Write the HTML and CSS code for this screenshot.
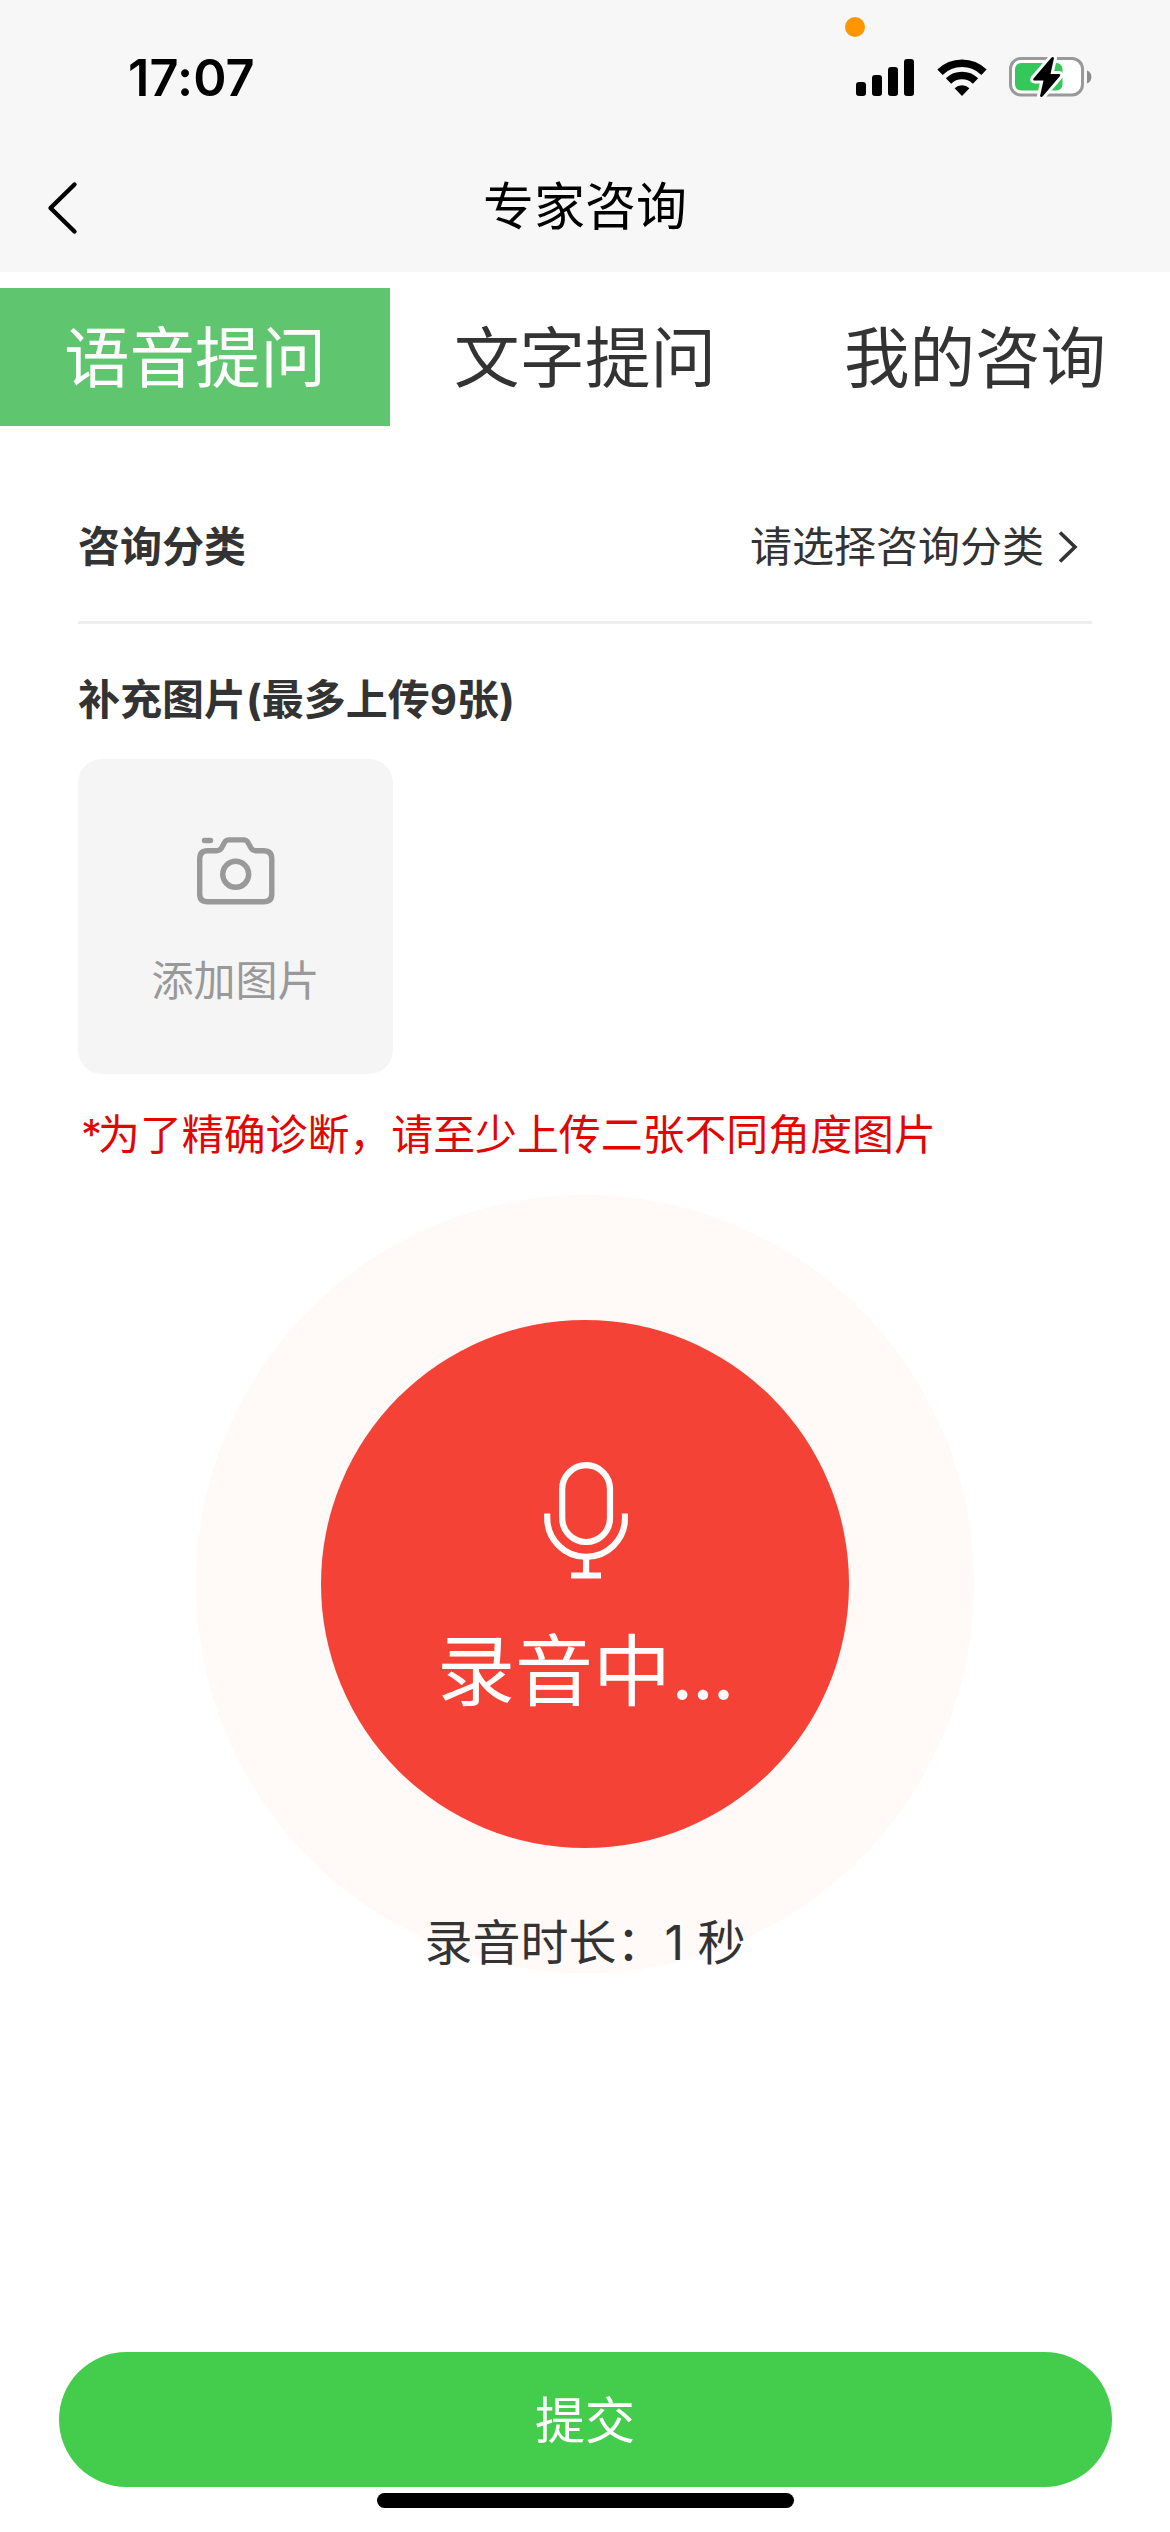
FILE: index.html
```html
<!DOCTYPE html>
<html lang="zh-CN">
<head>
<meta charset="utf-8">
<title>专家咨询</title>
<link rel="stylesheet" href="styles.css">
</head>
<body>
<div class="screen">
  <header class="top">
    <div class="status">
      <span class="time">17:07</span>
      <span class="mic-dot"></span>
      <div class="indicators">
        <svg class="signal" width="58" height="38" viewBox="0 0 58 38">
          <rect x="0" y="23" width="10" height="14" rx="3"/>
          <rect x="16" y="16" width="10" height="21" rx="3"/>
          <rect x="32" y="8" width="10" height="29" rx="3"/>
          <rect x="48" y="0" width="10" height="37" rx="3"/>
        </svg>
        <svg class="wifi" width="50" height="38" viewBox="0 0 50 38">
          <path d="M3 13.2A31.5 31.5 0 0 1 47 13.2M11.5 22A19.5 19.5 0 0 1 38.5 22" fill="none" stroke="#000" stroke-width="7.6"/>
          <path d="M17.6 29.2a10.5 10.5 0 0 1 14.8 0L25 37Z"/>
        </svg>
        <svg class="battery" width="84" height="42" viewBox="0 0 84 42">
          <rect x="1.5" y="2.5" width="72" height="36.500" rx="10.500" fill="#fff" stroke="#999" stroke-width="3"/>
          <path d="M78 14.500a7 7 0 0 1 0 13z" fill="#8c8c8c"/>
          <rect x="6" y="7" width="47.500" height="27.500" rx="6" fill="#34c759"/>
          <path d="M42.500 1.500 24.500 22.500q-1 2 1 2H34.500L31 40q1 2 3 0L51 20q1-2-1-2H41.500L45 2q-1-1.500-2.500-.5z" fill="#000" stroke="#fff" stroke-width="6" stroke-linejoin="round" paint-order="stroke"/>
        </svg>
      </div>
    </div>
    <div class="nav">
      <svg class="back" width="36" height="56" viewBox="0 0 36 56"><path d="M29.500 4.500 5.500 28l24 23.500" fill="none" stroke="#000" stroke-width="4.400" stroke-linecap="round" stroke-linejoin="round"/></svg>
      <h1 class="title">专家咨询</h1>
    </div>
  </header>
  <nav class="tabs">
    <a class="tab active">语音提问</a>
    <a class="tab">文字提问</a>
    <a class="tab">我的咨询</a>
  </nav>
  <main class="form">
    <div class="category">
      <span class="label">咨询分类</span>
      <span class="value">请选择咨询分类
        <svg class="arrow" width="20" height="34" viewBox="0 0 20 34"><path d="M2 2.500 17 17 2 31.500" fill="none" stroke="#333" stroke-width="3.600"/></svg>
      </span>
    </div>
    <div class="label photos">补充图片(最多上传9张)</div>
    <div class="upload">
      <svg width="78" height="68" viewBox="0 0 78 68" fill="none" stroke="#999" stroke-width="5.400">
        <path d="M7.500 3.500h6" stroke-linecap="round"/>
        <path d="M10.500 13.700H19.500Q23 13.700 24.500 11L27.500 5.500Q29 2.900 32 2.900H46.500Q49.500 2.900 51 5.500L54 11Q55.500 13.700 59 13.700H66.500Q74.800 13.700 74.800 22V57Q74.800 64.800 66.500 64.800H10.500Q2.700 64.800 2.700 57V22Q2.700 13.700 10.500 13.700Z"/>
        <circle cx="38.700" cy="37.300" r="13"/>
      </svg>
      <span>添加图片</span>
    </div>
    <p class="hint"><span class="star">*</span>为了精确诊断，请至少上传二张不同角度图片</p>
  </main>
  <section class="recorder">
    <div class="disc">
      <svg class="mic" width="84" height="118" viewBox="0 0 84 118" fill="none" stroke="#fff" stroke-width="6.200">
        <rect x="18.200" y="3.200" width="47.800" height="76.800" rx="23.900"/>
        <path d="M3.200 51.500V56A38.900 38.900 0 0 0 81 56V51.500M42.100 95V113.500M27 113.500H57"/>
      </svg>
      <span class="state">录音中<span class="dots">...</span></span>
    </div>
    <p class="duration">录音时长：1 秒</p>
  </section>
  <footer class="bottom">
    <button class="submit">提交</button>
    <div class="home-bar"></div>
  </footer>
</div>
</body>
</html>
```

FILE: styles.css
```css
* { box-sizing: border-box; margin: 0; padding: 0; }
body {
  background: #fff;
  color: #333;
  font-family: Inter, "Noto Sans CJK SC", sans-serif;
}
.screen {
  width: 1170px;
  height: 2532px;
  display: flex;
  flex-direction: column;
  overflow: hidden;
}
.top { height: 272px; background: #f7f7f7; color: #000; flex: none; }
.status {
  position: relative;
  height: 140px;
  display: flex;
  justify-content: space-between;
  padding: 48px 77px 0 128px;
}
.time { font-size: 50.5px; line-height: 60px; font-weight: 600; letter-spacing: 0.1px; }
.mic-dot {
  position: absolute;
  left: 845px;
  top: 17px;
  width: 20px;
  height: 20px;
  border-radius: 50%;
  background: #ff9500;
}
.indicators { display: flex; align-items: flex-start; padding-top: 11px; }
.wifi { margin-left: 23px; }
.battery { margin: -3px 0 0 22px; }
.nav {
  height: 132px;
  display: grid;
  grid-template-columns: 390px 390px 390px;
  align-items: start;
}
.back { margin: 40px 0 0 45px; }
.title { font-size: 51px; line-height: 60px; font-weight: 400; text-align: center; margin-top: 37px; }
.tabs { display: flex; margin-top: 16px; flex: none; }
.tab { flex: 1; height: 138px; line-height: 141px; font-size: 65.5px; text-align: center; }
.tab.active { background: #60c56f; color: #fff; }
.form { padding: 0 78px; flex: none; }
.category {
  height: 198px;
  padding-top: 91px;
  display: flex;
  justify-content: space-between;
  align-items: flex-start;
  border-bottom: 3px solid #eee;
  font-size: 42px;
  line-height: 60px;
}
.label { font-size: 42px; line-height: 60px; font-weight: 700; }
.value { display: flex; align-items: center; padding-right: 14px; }
.arrow { margin-left: 14px; }
.photos { margin-top: 46px; }
.upload {
  width: 315px;
  height: 315px;
  margin-top: 29px;
  padding-top: 78px;
  border-radius: 24px;
  background: #f5f5f5;
  color: #999;
  font-size: 42px;
  line-height: 60px;
  display: flex;
  flex-direction: column;
  align-items: center;
  gap: 46px;
}
.hint { margin-top: 31px; font-size: 41.9px; line-height: 60px; color: #e10602; padding-left: 3px; white-space: nowrap; }
.star { letter-spacing: -4px; }
.recorder {
  width: 778px;
  height: 778px;
  margin: 30px auto 0;
  padding-top: 125px;
  border-radius: 50%;
  background: #fff9f8;
  display: flex;
  flex-direction: column;
  align-items: center;
  flex: none;
}
.disc {
  width: 528px;
  height: 528px;
  border-radius: 50%;
  background: #f44336;
  color: #fff;
  display: flex;
  flex-direction: column;
  align-items: center;
  padding-top: 142px;
  flex: none;
}
.mic { margin-left: 2px; }
.state { font-size: 78px; line-height: 100px; margin-top: 42px; white-space: nowrap; }
.dots { letter-spacing: -1.8px; }
.duration { font-size: 48px; line-height: 60px; margin-top: 65px; white-space: nowrap; }
.bottom { margin-top: auto; padding: 0 59px 24px; display: flex; flex-direction: column; align-items: center; gap: 6px; }
.submit {
  width: 1053px;
  height: 135px;
  padding-top: 3px;
  border: 0;
  border-radius: 68px;
  background: #44cd4d;
  color: #fff;
  font: inherit;
  font-size: 50px;
  line-height: 60px;
}
.home-bar { width: 417px; height: 15px; border-radius: 8px; background: #000; }
```
